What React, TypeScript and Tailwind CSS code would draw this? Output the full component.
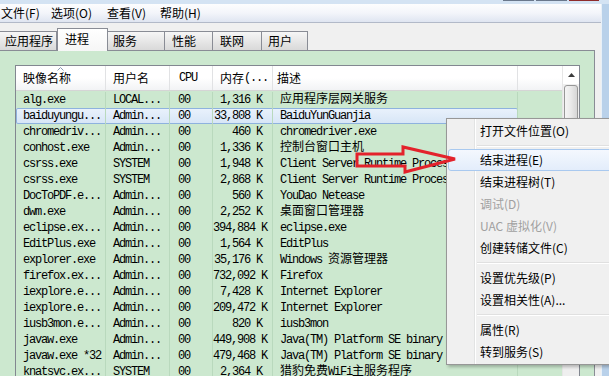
import React from "react";

const CJK = /([\u3000-\u9fff\uff00-\uffef]+)/;

function Mixed({ text }: { text: string }) {
  const parts = text.split(CJK);
  return (
    <>
      {parts.map((p, i) =>
        p === "" ? null : CJK.test(p) ? (
          <span
            key={i}
            className="font-['Noto_Sans_CJK_SC',sans-serif] text-[12px] leading-none tracking-normal"
          >
            {p}
          </span>
        ) : (
          <span key={i}>{p}</span>
        )
      )}
    </>
  );
}

type Row = [string, string, string, string, string];

const rows: Row[] = [
  ["alg.exe", "LOCAL...", "00", "1,316 K", "应用程序层网关服务"],
  ["baiduyungu...", "Admin...", "00", "33,808 K", "BaiduYunGuanjia"],
  ["chromedriv...", "Admin...", "00", "460 K", "chromedriver.exe"],
  ["conhost.exe", "Admin...", "00", "1,336 K", "控制台窗口主机"],
  ["csrss.exe", "SYSTEM", "00", "1,948 K", "Client Server Runtime Process"],
  ["csrss.exe", "SYSTEM", "00", "2,868 K", "Client Server Runtime Process"],
  ["DocToPDF.e...", "Admin...", "00", "560 K", "YouDao Netease"],
  ["dwm.exe", "Admin...", "00", "2,252 K", "桌面窗口管理器"],
  ["eclipse.ex...", "Admin...", "00", "394,884 K", "eclipse.exe"],
  ["EditPlus.exe", "Admin...", "00", "1,564 K", "EditPlus"],
  ["explorer.exe", "Admin...", "00", "35,176 K", "Windows 资源管理器"],
  ["firefox.ex...", "Admin...", "00", "732,092 K", "Firefox"],
  ["iexplore.e...", "Admin...", "00", "7,428 K", "Internet Explorer"],
  ["iexplore.e...", "Admin...", "00", "209,472 K", "Internet Explorer"],
  ["iusb3mon.e...", "Admin...", "00", "820 K", "iusb3mon"],
  ["javaw.exe", "Admin...", "00", "449,908 K", "Java(TM) Platform SE binary"],
  ["javaw.exe *32", "Admin...", "00", "479,468 K", "Java(TM) Platform SE binary"],
  ["knatsvc.ex...", "SYSTEM", "00", "2,364 K", "猎豹免费WiFi主服务程序"],
];

const tabs = [
  { label: "应用程序", w: "w-[57px]", pl: "pl-[5px]", sel: false },
  { label: "进程", w: "w-[51px]", pl: "pl-[7px]", sel: true },
  { label: "服务", w: "w-[57px]", pl: "pl-[5px]", sel: false },
  { label: "性能", w: "w-[48px]", pl: "pl-[7px]", sel: false },
  { label: "联网", w: "w-[49px]", pl: "pl-[7px]", sel: false },
  { label: "用户", w: "w-[46px]", pl: "pl-[6px]", sel: false },
];

type MenuEntry =
  | { sep: true; h: string }
  | { sep?: false; label: string; disabled?: boolean; hot?: boolean };

const menu: MenuEntry[] = [
  { label: "打开文件位置(O)" },
  { sep: true, h: "h-[7px]" },
  { label: "结束进程(E)", hot: true },
  { label: "结束进程树(T)" },
  { label: "调试(D)", disabled: true },
  { label: "UAC 虚拟化(V)", disabled: true },
  { label: "创建转储文件(C)" },
  { sep: true, h: "h-[8px]" },
  { label: "设置优先级(P)" },
  { label: "设置相关性(A)..." },
  { sep: true, h: "h-[8px]" },
  { label: "属性(R)" },
  { label: "转到服务(S)" },
];

const mono =
  "font-['Liberation_Mono',monospace] text-[12px] tracking-[-1.2px] whitespace-nowrap";

function ListRow({ r, selected }: { r: Row; selected: boolean }) {
  return (
    <div className={`flex h-[16px] items-center leading-[16px] ${mono}`}>
      <div
        className={`flex h-[16px] w-[502px] items-center ${
          selected
            ? "rounded-[2px] bg-linear-to-b from-[#eaf2fc] to-[#d6e5f6] shadow-[inset_0_0_0_1px_#8eb2de]"
            : ""
        }`}
      >
        <div className="h-full w-[90px] overflow-hidden border-r border-[#b9d9bd] pl-[7px]">
          {r[0]}
        </div>
        <div className="h-full w-[64px] overflow-hidden border-r border-[#b9d9bd] pl-[7px]">
          {r[1]}
        </div>
        <div className="h-full w-[43px] overflow-hidden border-r border-[#b9d9bd] pl-[8px]">
          {r[2]}
        </div>
        <div className="h-full w-[60px] overflow-hidden border-r border-[#b9d9bd] pr-[10px] text-right">
          {r[3]}
        </div>
        <div className="h-full w-[245px] overflow-hidden border-r border-[#b9d9bd] pl-[7px]">
          <Mixed text={r[4]} />
        </div>
      </div>
      <div className="h-full flex-1" />
    </div>
  );
}

export default function App() {
  return (
    <div className="relative flex h-[376px] w-[609px] flex-col overflow-hidden bg-[#f0f0f0] font-['Noto_Sans_CJK_SC',sans-serif] text-[12px] text-black">
      {/* title bar bottom strip */}
      <div className="flex h-[4px] shrink-0 bg-[#d4e3f3]">
        <div className="w-[503px]" />
        <div className="h-[1px] w-[31px] bg-[#6a788c]" />
        <div className="w-[2px]" />
        <div className="h-[1px] w-[31px] bg-[#6a788c]" />
        <div className="w-[2px]" />
        <div className="h-[1px] w-[30px] bg-[#8f2b2b]" />
      </div>

      <div className="flex min-h-0 flex-1">
        <div className="flex min-w-0 flex-1 flex-col">
          {/* menu bar */}
          <div className="flex h-[19px] shrink-0 items-center border-b border-[#b2b9c8] bg-linear-to-b from-[#fdfdfe] via-[#f3f5fa] to-[#dfe5f1] leading-none">
            <div className="w-[51px] pl-[1px]">文件(F)</div>
            <div className="w-[56px]">选项(O)</div>
            <div className="w-[53px]">查看(V)</div>
            <div>帮助(H)</div>
          </div>

          {/* tabs */}
          <div className="flex h-[27px] shrink-0 items-end">
            {tabs.map((t) =>
              t.sel ? (
                <div
                  key={t.label}
                  className={`relative z-10 -mb-[1px] flex h-[23px] ${t.w} ${t.pl} items-center border-x border-t border-[#898c95] bg-linear-to-b from-white to-[#f6f6f6] pb-[2px] leading-none`}
                >
                  {t.label}
                </div>
              ) : (
                <div
                  key={t.label}
                  className={`flex h-[19px] ${t.w} ${t.pl} items-center border-r border-t border-[#898c95] bg-linear-to-b from-[#f6f6f6] to-[#d9d9d9] leading-none`}
                >
                  {t.label}
                </div>
              )
            )}
          </div>

          {/* tab page */}
          <div className="mr-[6px] flex min-h-0 flex-1 flex-col border-r border-t border-[#898c95] bg-[#cce8cf] pl-[15px] pr-[14px] pt-[14px]">
            <div className="flex min-h-0 flex-1 border-x border-t border-[#828790] bg-[#cce8cf]">
              <div className="flex w-[546px] flex-col">
                {/* header */}
                <div className="flex h-[25px] shrink-0 items-center border-b border-[#d5d5d5] bg-linear-to-b from-white via-white to-[#f2f3f5] leading-none">
                  <div className="relative flex h-full w-[90px] items-center border-r border-[#e1e2e4] pl-[7px]">
                    <svg
                      className="absolute left-[41px] top-[1px]"
                      width="7"
                      height="4"
                      viewBox="0 0 7 4"
                    >
                      <path d="M0.5 3.5 L3.5 0.5 L6.5 3.5" fill="none" stroke="#8a9bb0" strokeWidth="1" />
                    </svg>
                    映像名称
                  </div>
                  <div className="flex h-full w-[64px] items-center border-r border-[#e1e2e4] pl-[7px]">
                    用户名
                  </div>
                  <div className={`flex h-full w-[43px] items-center border-r border-[#e1e2e4] pl-[9px] ${mono}`}>
                    CPU
                  </div>
                  <div className={`flex h-full w-[60px] items-center border-r border-[#e1e2e4] pl-[7px] ${mono}`}>
                    <Mixed text="内存(..." />
                  </div>
                  <div className="flex h-full w-[245px] items-center border-r border-[#e1e2e4] pl-[4px]">
                    描述
                  </div>
                  <div className="h-full flex-1" />
                </div>
                {/* rows */}
                <div className="flex flex-col pt-[1px]">
                  {rows.map((r, i) => (
                    <ListRow key={i} r={r} selected={i === 1} />
                  ))}
                </div>
              </div>
              {/* scrollbar */}
              <div className="flex w-[17px] flex-col border-l border-[#e6e6e6] bg-[#efefef]">
                <div className="flex h-[18px] shrink-0 items-center justify-center bg-white">
                  <svg width="7" height="4" viewBox="0 0 7 4">
                    <path d="M0 4 L3.5 0 L7 4 Z" fill="#3c3c3c" />
                  </svg>
                </div>
                <div className="mx-[1px] mt-[1px] h-[230px] rounded-[3px] border border-[#979797] bg-linear-to-r from-[#f5f5f5] via-[#e9e9e9] to-[#d6d6d6]" />
              </div>
            </div>
          </div>
        </div>
        {/* right window frame */}
        <div className="w-[8px] border-l border-[#e8f0f8] bg-[#b9d1ea]" />
      </div>

      {/* context menu */}
      <div className="absolute left-[446px] top-[118px] w-[175px] border border-[#979797] bg-[#f0f0f0] py-[1px] shadow-[2px_2px_3px_rgba(0,0,0,0.25)]">
        <div className="absolute bottom-0 left-[27px] top-0 w-[2px] border-l border-r border-l-[#e2e3e3] border-r-white" />
        {menu.map((m, i) =>
          m.sep ? (
            <div key={i} className={`relative flex ${m.h} items-center pl-[30px]`}>
              <div className="w-full">
                <div className="h-[1px] bg-[#e0e0e0]" />
                <div className="h-[1px] bg-white" />
              </div>
            </div>
          ) : m.hot ? (
            <div
              key={i}
              className="relative mx-[1px] flex h-[22px] items-center rounded-[3px] border border-[#a9c9ef] bg-linear-to-b from-[#f4f8fe] to-[#e3edfb] pl-[31px] leading-none"
            >
              {m.label}
            </div>
          ) : (
            <div
              key={i}
              className={`relative flex h-[22px] items-center pl-[33px] leading-none ${
                m.disabled ? "text-[#a0a0a0]" : "text-black"
              }`}
            >
              {m.label}
            </div>
          )
        )}
      </div>

      {/* red arrow annotation */}
      <svg
        className="pointer-events-none absolute left-0 top-0"
        width="609"
        height="376"
        viewBox="0 0 609 376"
      >
        <polygon
          points="357,154 403,154 403,147 455,159 405,172 405,166 357,166"
          fill="none"
          stroke="#e3222b"
          strokeWidth="3"
          strokeLinejoin="miter"
        />
      </svg>
    </div>
  );
}
